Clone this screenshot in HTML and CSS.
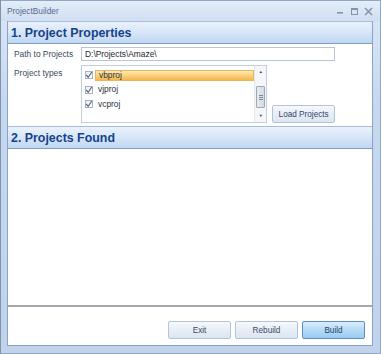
FILE: index.html
```html
<!DOCTYPE html>
<html lang="en">
  <head>
    <meta charset="UTF-8" />
    <title>ProjectBuilder</title>
    <link rel="stylesheet" href="styles.css">
  </head>
  <body>
    <div class="window">
      <!-- title bar -->
      <div class="titlebar">
        <span class="title">ProjectBuilder</span>
        <div class="controls">
          <svg width="9" height="9" viewBox="0 0 9 9"><rect x="1" y="5" width="6" height="1.6" fill="#8193ad" /></svg>
          <svg width="9" height="9" viewBox="0 0 9 9"><rect x="1.5" y="1.5" width="6" height="6" fill="none" stroke="#8193ad" /><rect x="1" y="1" width="7" height="2" fill="#8193ad" /></svg>
          <svg width="9" height="9" viewBox="0 0 9 9"><path d="M1 1 L8 8 M8 1 L1 8" stroke="#8193ad" stroke-width="1.5" /></svg>
        </div>
      </div>

      <div class="client">
        <div class="section-head">1. Project Properties</div>

        <div class="props">
          <span class="field-label">Path to Projects</span>
          <div class="path-input">D:\Projects\Amaze\</div>

          <span class="field-label types-label">Project types</span>
          <div class="types-row">
            <div class="listbox">
              <div class="items">
                <div class="item">
                  <span class="check"><svg width="8" height="8" viewBox="0 0 8 8"><path d="M1.2 4 L3.2 6.3 L6.8 1" fill="none" stroke="#56698a" stroke-width="1.2" /></svg></span>
                  <span class="item-text selected">vbproj</span>
                </div>
                <div class="item">
                  <span class="check"><svg width="8" height="8" viewBox="0 0 8 8"><path d="M1.2 4 L3.2 6.3 L6.8 1" fill="none" stroke="#56698a" stroke-width="1.2" /></svg></span>
                  <span class="item-text">vjproj</span>
                </div>
                <div class="item">
                  <span class="check"><svg width="8" height="8" viewBox="0 0 8 8"><path d="M1.2 4 L3.2 6.3 L6.8 1" fill="none" stroke="#56698a" stroke-width="1.2" /></svg></span>
                  <span class="item-text">vcproj</span>
                </div>
              </div>
              <div class="scrollbar">
                <span class="arrow">&#9650;</span>
                <div class="track">
                  <div class="thumb"><span class="grip"></span></div>
                </div>
                <span class="arrow">&#9660;</span>
              </div>
            </div>
            <button class="btn load">Load Projects</button>
          </div>
        </div>

        <div class="section-head">2. Projects Found</div>
        <div class="found"></div>

        <div class="actions">
          <button class="btn">Exit</button>
          <button class="btn">Rebuild</button>
          <button class="btn primary">Build</button>
        </div>
      </div>
    </div>
  </body>
</html>
```

FILE: styles.css
```css
body {
  margin: 0;
  font-family: "Liberation Sans", Arial, sans-serif;
  font-size: 8.4px;
  color: #3b4656;
}
.window {
  width: 381px;
  height: 354px;
  box-sizing: border-box;
  display: flex;
  flex-direction: column;
  background: linear-gradient(#dbe7f6, #c6d8ee 30%, #c0d3eb);
  border: 1px solid #8fa6c4;
  border-left-color: #7f93ad;
}
.titlebar {
  height: 20px;
  display: flex;
  align-items: center;
  justify-content: space-between;
  padding: 0 6px 0 6px;
  background: linear-gradient(#e4edf9, #d0def1);
}
.title {
  color: #56698a;
  font-size: 8.3px;
}
.controls {
  display: flex;
  gap: 5px;
  margin-right: 1px;
}
.client {
  flex: 1;
  display: flex;
  flex-direction: column;
  margin: 0 7px 7px 6px;
  background: #fff;
  border: 1px solid #8aa3c6;
  border-top: none;
}
.section-head {
  height: 21px;
  display: flex;
  align-items: center;
  padding-left: 3px;
  font-size: 12.4px;
  font-weight: bold;
  color: #15428b;
  background: linear-gradient(#eaf2fc, #d9e7f8 45%, #c0d7f3);
  border-top: 1px solid #a7bcd9;
  border-bottom: 1px solid #7e9cc4;
}
.props {
  display: grid;
  grid-template-columns: 67px 254px;
  row-gap: 4px;
  padding: 3px 0 3px 6px;
}
.field-label {
  color: #3d4a5e;
  align-self: center;
}
.types-label {
  align-self: start;
  padding-top: 3px;
}
.path-input {
  height: 14px;
  box-sizing: border-box;
  border: 1px solid #b6c5d9;
  padding: 0 3px;
  line-height: 12px;
  color: #1e2733;
}
.types-row {
  display: flex;
  align-items: flex-end;
  gap: 5px;
}
.listbox {
  width: 187px;
  height: 58px;
  box-sizing: border-box;
  border: 1px solid #c3cfdd;
  display: flex;
}
.items {
  flex: 1;
  padding: 2px 0 0 3px;
}
.item {
  height: 14.5px;
  display: flex;
  align-items: center;
  gap: 2px;
}
.check {
  width: 8px;
  height: 8px;
  box-sizing: border-box;
  border: 1px solid #a9b3c1;
  background: linear-gradient(#eef2f7, #fff);
  display: flex;
}
.check svg {
  margin: -1px;
}
.item-text {
  flex: 1;
  height: 11px;
  line-height: 11px;
  padding-left: 3px;
  color: #2a3444;
}
.item-text.selected {
  background: linear-gradient(#fde9b8, #fbd27c 50%, #f7b64a);
  border: 1px solid #e8b45c;
  line-height: 9px;
  box-sizing: border-box;
}
.scrollbar {
  width: 11px;
  display: flex;
  flex-direction: column;
  align-items: center;
  background: #f4f6f9;
  border-left: 1px solid #e3e8ef;
}
.arrow {
  font-size: 4px;
  color: #3a3a3a;
  height: 12px;
  line-height: 12px;
}
.track {
  flex: 1;
  width: 100%;
  display: flex;
  flex-direction: column;
  justify-content: flex-end;
  padding-bottom: 2px;
  box-sizing: border-box;
}
.thumb {
  height: 20px;
  margin: 0 1px;
  border: 1px solid #9ea8b6;
  border-radius: 1px;
  background: linear-gradient(90deg, #e8ecf1, #d4dae2);
  display: flex;
  align-items: center;
  justify-content: center;
}
.grip {
  width: 4px;
  height: 5px;
  border-top: 1px solid #7a8595;
  border-bottom: 1px solid #7a8595;
  box-sizing: border-box;
  background: linear-gradient(#7a8595, #7a8595) center / 4px 1px no-repeat;
}
.btn {
  font-family: "Liberation Sans", Arial, sans-serif;
  font-size: 8.2px;
  color: #3a4a66;
  height: 18px;
  padding: 0;
  border: 1px solid #b3c3d8;
  border-radius: 2px;
  background: linear-gradient(#f6f9fd, #e9eff7 45%, #dce5f0);
}
.btn.load {
  width: 63px;
  color: #33466a;
}
.btn.primary {
  border-color: #5b8fc9;
  background: linear-gradient(#dcedfb, #b8dcf7 45%, #98ccf2);
  color: #26406a;
}
.found {
  flex: 1;
  border-bottom: 2px solid #a3a8ae;
}
.actions {
  height: 38px;
  box-sizing: border-box;
  display: flex;
  justify-content: flex-end;
  align-items: flex-start;
  gap: 4px;
  padding: 14px 7px 0 0;
}
.actions .btn {
  width: 63px;
}
```
